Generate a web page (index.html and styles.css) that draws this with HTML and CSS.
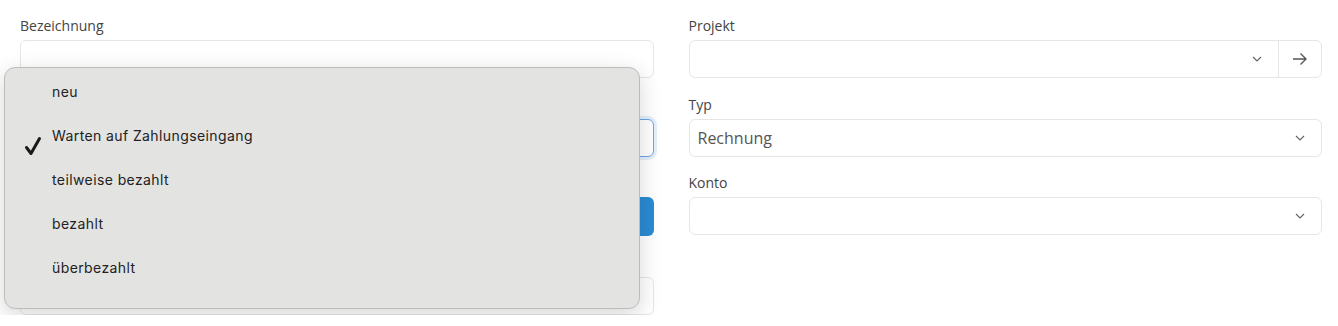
FILE: index.html
```html
<!DOCTYPE html>
<html lang="de">

<head>
    <meta charset="UTF-8">
    <meta name="viewport" content="width=device-width, initial-scale=1.0">
    <title>Rechnung bearbeiten</title>
    <link rel="stylesheet" href="styles.css">
</head>

<body>
    <div class="form">
        <div class="column left">
            <div class="field">
                <label class="label">Bezeichnung</label>
                <div class="input"></div>
            </div>
            <div class="field">
                <label class="label">&nbsp;</label>
                <div class="input focused"></div>
            </div>
            <div class="field">
                <label class="label">&nbsp;</label>
                <div class="button"></div>
            </div>
            <div class="field">
                <label class="label">&nbsp;</label>
                <div class="input"></div>
            </div>

            <!-- geöffnetes Status-Menü -->
            <div class="menu">
                <div class="menu-item">neu</div>
                <div class="menu-item checked">
                    <svg class="check" width="18" height="20" viewBox="0 0 18 20">
                        <path d="M2.5 11.5 L7 17.5 L15.5 2.5" fill="none" stroke="#1a1a1a" stroke-width="3"
                            stroke-linecap="round" stroke-linejoin="round" />
                    </svg>
                    Warten auf Zahlungseingang
                </div>
                <div class="menu-item">teilweise bezahlt</div>
                <div class="menu-item">bezahlt</div>
                <div class="menu-item">überbezahlt</div>
            </div>
        </div>

        <div class="column right">
            <div class="field">
                <label class="label">Projekt</label>
                <div class="input group">
                    <div class="select-area">
                        <svg class="chevron" width="10" height="6" viewBox="0 0 10 6">
                            <path d="M1 1 L5 5 L9 1" fill="none" stroke="#666" stroke-width="1.2" />
                        </svg>
                    </div>
                    <div class="go">
                        <svg width="16" height="14" viewBox="0 0 16 14">
                            <path d="M1 7 H14 M8.5 1.5 L14 7 L8.5 12.5" fill="none" stroke="#555"
                                stroke-width="1.4" />
                        </svg>
                    </div>
                </div>
            </div>
            <div class="field">
                <label class="label">Typ</label>
                <div class="input select">
                    <span class="value">Rechnung</span>
                    <svg class="chevron" width="10" height="6" viewBox="0 0 10 6">
                        <path d="M1 1 L5 5 L9 1" fill="none" stroke="#666" stroke-width="1.2" />
                    </svg>
                </div>
            </div>
            <div class="field">
                <label class="label">Konto</label>
                <div class="input select">
                    <span class="value"></span>
                    <svg class="chevron" width="10" height="6" viewBox="0 0 10 6">
                        <path d="M1 1 L5 5 L9 1" fill="none" stroke="#666" stroke-width="1.2" />
                    </svg>
                </div>
            </div>
        </div>
    </div>
</body>

</html>
```

FILE: styles.css
```css
* {
    margin: 0;
    padding: 0;
    box-sizing: border-box;
}

body {
    background: #fff;
    font-family: 'Open Sans', 'Noto Sans', sans-serif;
    color: #3a3a3a;
    overflow: hidden;
}

.form {
    display: grid;
    grid-template-columns: 1fr 1fr;
    column-gap: 35px;
    padding: 16px 16px 0 20px;
}

.column {
    display: flex;
    flex-direction: column;
    gap: 16.5px;
    position: relative;
}

.field {
    display: flex;
    flex-direction: column;
    gap: 4px;
}

.label {
    font-size: 14px;
    line-height: 20px;
    color: #444;
}

.input {
    height: 38px;
    border: 1px solid #e6e6e6;
    border-radius: 6px;
    background: #fff;
}

.input.focused {
    border-color: #6aa6e6;
    box-shadow: 0 0 0 3px rgba(106, 166, 230, 0.18);
}

.button {
    height: 39px;
    border-radius: 6px;
    background: #2b8bd3;
}

.select {
    display: flex;
    align-items: center;
    justify-content: space-between;
    padding: 0 16px 0 8px;
}

.value {
    font-size: 16px;
    color: #555;
}

.group {
    display: flex;
}

.select-area {
    flex: 1;
    display: flex;
    align-items: center;
    justify-content: flex-end;
    padding-right: 16px;
}

.go {
    width: 43px;
    border-left: 1px solid #e6e6e6;
    display: flex;
    align-items: center;
    justify-content: center;
}

/* Menü über der linken Spalte */
.menu {
    position: absolute;
    top: 51px;
    left: -16px;
    width: 636px;
    height: 242px;
    background: #e3e3e2;
    border: 1px solid #bdbdbc;
    border-radius: 11px;
    box-shadow: 0 6px 22px rgba(0, 0, 0, 0.16);
    padding-top: 1px;
    font-family: 'Inter', 'Liberation Sans', sans-serif;
    font-size: 14px;
    letter-spacing: 0.4px;
    color: #222;
}

.menu-item {
    height: 44px;
    display: flex;
    align-items: center;
    padding-left: 47px;
    position: relative;
}

.check {
    position: absolute;
    left: 19px;
    top: 23px;
}
```
